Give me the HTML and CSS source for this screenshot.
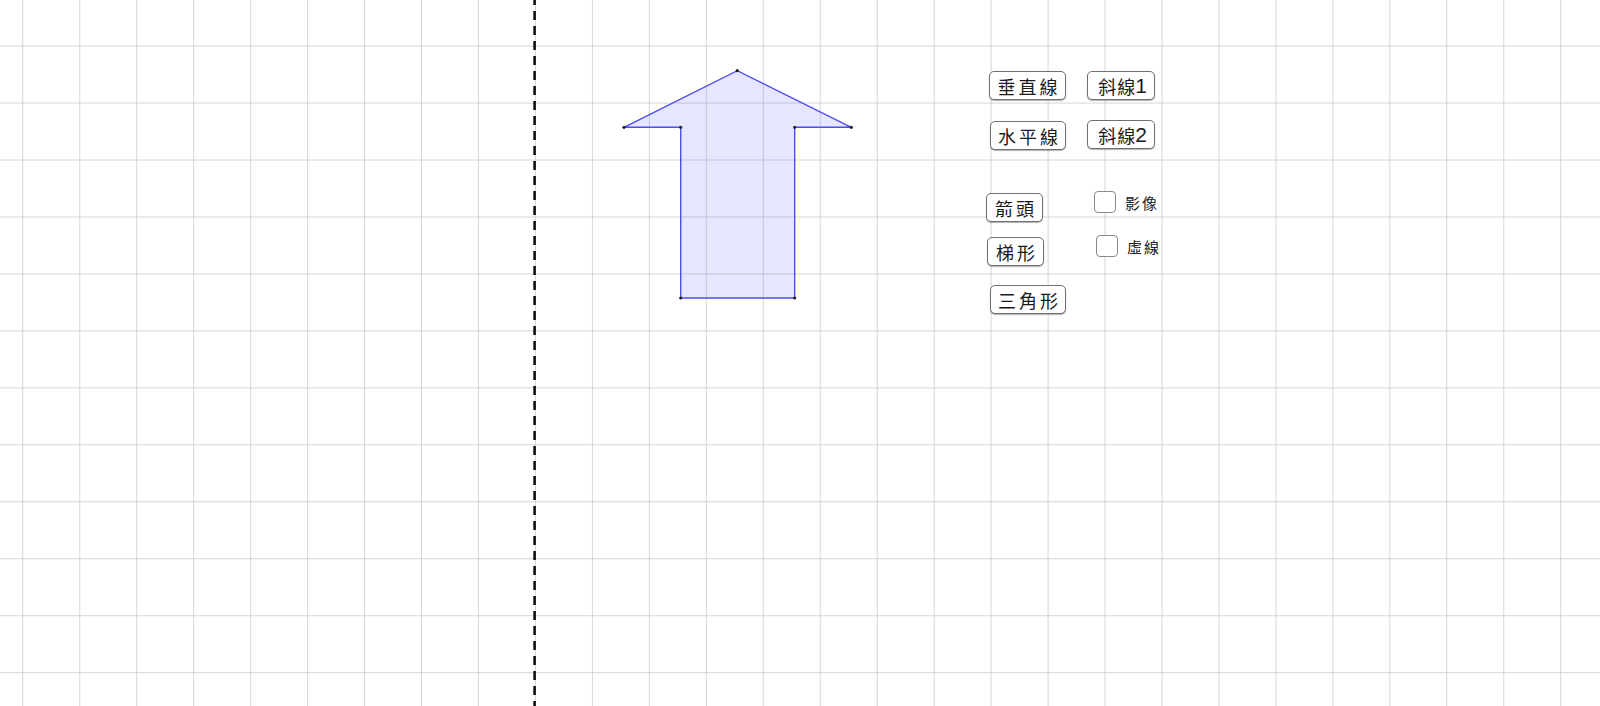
FILE: index.html
```html
<!DOCTYPE html>
<html lang="zh-Hant">
<head>
    <meta charset="utf-8">
    <title>對稱圖形</title>
    <link rel="stylesheet" href="styles.css">
</head>
<body>
    <div class="board">
        <svg class="canvas" width="1600" height="706" viewBox="0 0 1600 706">
            <defs>
                <pattern id="grid" x="22.3" y="45.6" width="56.96" height="56.96" patternUnits="userSpaceOnUse">
                    <path d="M0 0 H56.96 M0 0 V56.96" class="grid-line"/>
                </pattern>
            </defs>
            <rect width="1600" height="706" fill="url(#grid)"/>

            <!-- axis of symmetry -->
            <line x1="534.6" y1="-4" x2="534.6" y2="706" class="mirror"/>

            <!-- the arrow -->
            <polygon class="shape" points="624,127.3 680.7,127.3 680.7,298 794.7,298 794.7,127.3 851.3,127.3 737.3,70.7"/>
            <g class="pts">
                <circle cx="624" cy="127.3" r="1.6"/>
                <circle cx="680.7" cy="127.3" r="1.6"/>
                <circle cx="680.7" cy="298" r="1.6"/>
                <circle cx="794.7" cy="298" r="1.6"/>
                <circle cx="794.7" cy="127.3" r="1.6"/>
                <circle cx="851.3" cy="127.3" r="1.6"/>
                <circle cx="737.3" cy="70.7" r="1.6"/>
            </g>
        </svg>

        <button class="tool btn-vertical">垂直線</button>
        <button class="tool btn-slant1">斜線<span class="num">1</span></button>
        <button class="tool btn-horizontal">水平線</button>
        <button class="tool btn-slant2">斜線<span class="num">2</span></button>
        <button class="tool btn-arrow">箭頭</button>
        <button class="tool btn-trapezoid">梯形</button>
        <button class="tool btn-triangle">三角形</button>

        <label class="check check-image"><span class="box"></span>影像</label>
        <label class="check check-dashed"><span class="box"></span>虛線</label>
    </div>
</body>
</html>
```

FILE: styles.css
```css
body {
    margin: 0;
    padding: 0;
    background: #ffffff;
    font-family: "Noto Sans CJK TC", "Noto Sans CJK SC", sans-serif;
    overflow: hidden;
}
.board {
    position: relative;
    width: 1600px;
    height: 706px;
}
.canvas {
    display: block;
}
.grid-line {
    fill: none;
    stroke: #c9c9c9;
    stroke-width: 1.5;
}
.mirror {
    stroke: #111;
    stroke-width: 2.6;
    stroke-dasharray: 9 6;
}
.shape {
    fill: rgba(77, 77, 255, 0.14);
    stroke: #4d4df0;
    stroke-width: 1.4;
    stroke-linejoin: miter;
}
.pts circle {
    fill: #222;
}

/* buttons sit on the drawing board like GeoGebra widgets */
.tool {
    position: absolute;
    display: flex;
    align-items: center;
    justify-content: center;
    height: 29px;
    box-sizing: border-box;
    padding: 0 0 0 3px;
    background: #fff;
    border: 1px solid #6f6f6f;
    border-radius: 5px;
    box-shadow: 0 1px 1px rgba(0, 0, 0, 0.3);
    font-family: "Noto Sans CJK TC", "Noto Sans CJK SC", sans-serif;
    font-size: 18px;
    letter-spacing: 3px;
    color: #1a1a1a;
    cursor: pointer;
}
.tool .num {
    font-family: "Liberation Sans", Arial, sans-serif;
    font-size: 21px;
    letter-spacing: 0;
    margin-left: -1px;
}
.btn-vertical   { left: 989px;  top: 71px;  width: 77px; }
.btn-slant1     { left: 1087px; top: 71px;  width: 68px; letter-spacing: 1px; }
.btn-horizontal { left: 990px;  top: 121px; width: 76px; }
.btn-slant2     { left: 1087px; top: 120px; width: 68px; letter-spacing: 1px; }
.btn-arrow      { left: 986px;  top: 193px; width: 57px; }
.btn-trapezoid  { left: 987px;  top: 237px; width: 57px; }
.btn-triangle   { left: 990px;  top: 285px; width: 76px; }

.check {
    position: absolute;
    display: flex;
    align-items: center;
    gap: 9px;
    font-size: 15px;
    letter-spacing: 2px;
    color: #222;
}
.check .box {
    width: 22px;
    height: 22px;
    box-sizing: border-box;
    border: 1px solid #8a8a8a;
    border-radius: 4px;
    background: #fff;
}
.check-image  { left: 1094px; top: 191px; }
.check-dashed { left: 1096px; top: 235px; }
```
